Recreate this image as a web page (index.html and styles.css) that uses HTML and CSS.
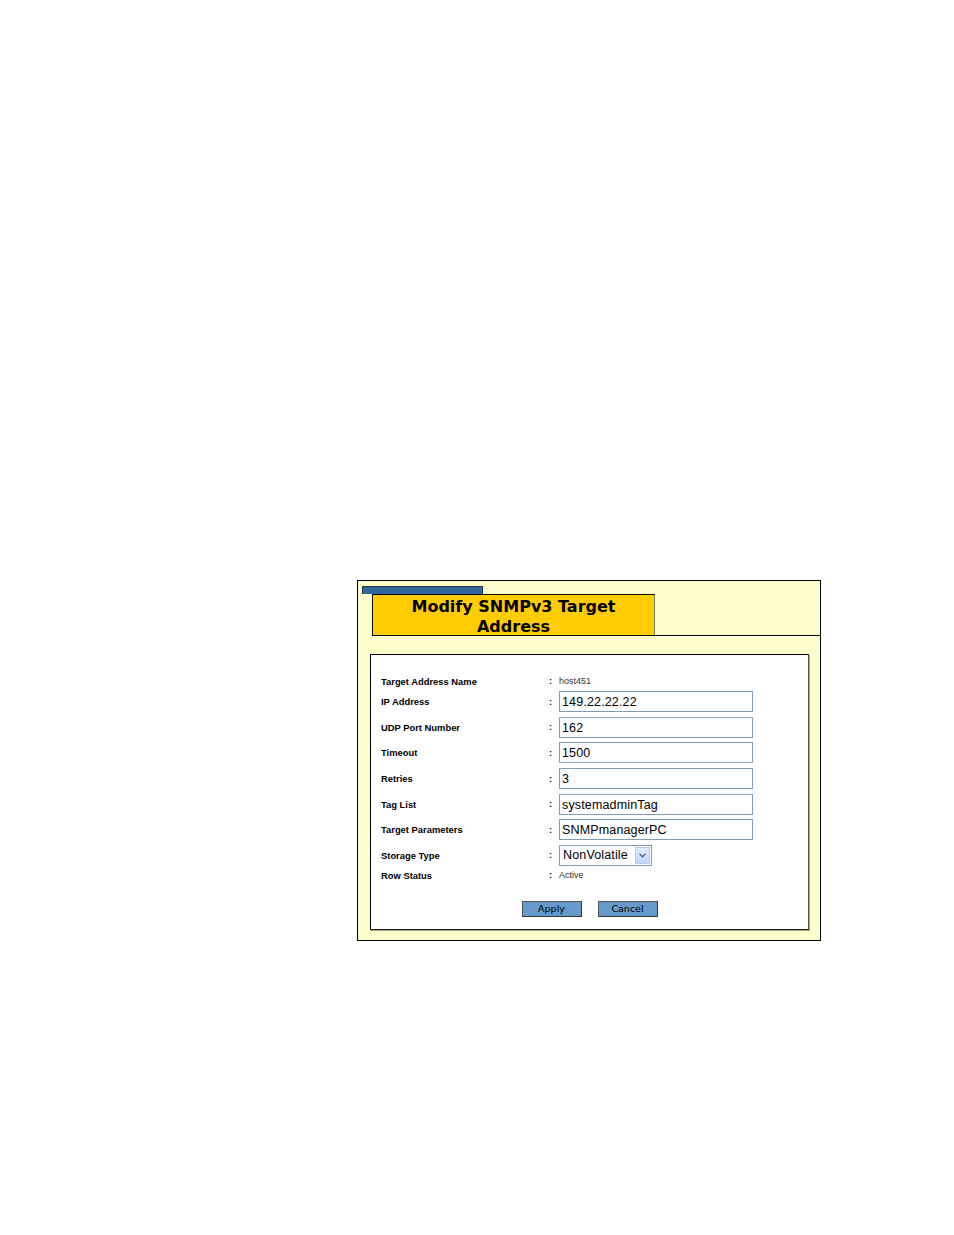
FILE: index.html
```html
<!DOCTYPE html>
<html>
<head>
<meta charset="utf-8">
<link rel="stylesheet" href="styles.css">
</head>
<body>
<div class="page">
  <div class="panel">
    <div class="tab-bar"></div>
    <div class="header">
      <div class="title">Modify SNMPv3 Target<br>Address</div>
    </div>
    <div class="form-box">
      <div class="grid">
        <div class="row row-text">
          <span class="label">Target Address Name</span><span class="colon">:</span><span class="value">host451</span>
        </div>
        <div class="row row-input">
          <span class="label">IP Address</span><span class="colon">:</span><span class="input">149.22.22.22</span>
        </div>
        <div class="row row-input">
          <span class="label">UDP Port Number</span><span class="colon">:</span><span class="input">162</span>
        </div>
        <div class="row row-input">
          <span class="label">Timeout</span><span class="colon">:</span><span class="input">1500</span>
        </div>
        <div class="row row-input">
          <span class="label">Retries</span><span class="colon">:</span><span class="input">3</span>
        </div>
        <div class="row row-input">
          <span class="label">Tag List</span><span class="colon">:</span><span class="input">systemadminTag</span>
        </div>
        <div class="row row-input">
          <span class="label">Target Parameters</span><span class="colon">:</span><span class="input">SNMPmanagerPC</span>
        </div>
        <div class="row row-input">
          <span class="label">Storage Type</span><span class="colon">:</span>
          <span class="select"><span class="select-text">NonVolatile</span><span class="select-btn"><svg width="7" height="5" viewBox="0 0 7 5"><path d="M0.5 0.8 L3.5 3.8 L6.5 0.8" fill="none" stroke="#4d6185" stroke-width="1.3"/></svg></span></span>
        </div>
        <div class="row row-status">
          <span class="label">Row Status</span><span class="colon">:</span><span class="value">Active</span>
        </div>
      </div>
      <div class="buttons">
        <span class="btn">Apply</span>
        <span class="btn">Cancel</span>
      </div>
    </div>
  </div>
</div>
</body>
</html>
```

FILE: styles.css
```css
html, body {
  margin: 0;
  padding: 0;
  background: #ffffff;
}
.page {
  padding-top: 580px;
  padding-left: 357px;
}
.panel {
  width: 462px;
  height: 354px;
  border: 1px solid #000;
  background: #ffffcc;
  box-sizing: content-box;
  padding-top: 5px;
}
.tab-bar {
  margin-left: 4px;
  width: 119px;
  height: 7px;
  background: #336699;
  border: 1px solid #1f3550;
  border-bottom: none;
}
.header {
  margin-left: 14px;
  border-bottom: 1px solid #000;
  display: flex;
}
.title {
  width: 281px;
  height: 38px;
  padding-top: 2px;
  background: #ffcc00;
  border-top: 1px solid #000;
  border-left: 1px solid #000;
  border-right: 1px solid #7a7a6a;
  text-align: center;
  font-family: "DejaVu Sans", Verdana, sans-serif;
  font-weight: bold;
  font-size: 16px;
  line-height: 20px;
  color: #000;
}
.form-box {
  margin: 18px 11px 0 12px;
  height: 276px;
  background: #fff;
  border: 1px solid #000;
  border-right-color: #555;
  border-bottom-color: #222;
  box-shadow: 1px 1px 0 #a0a090;
  padding: 18px 10px 0 10px;
  box-sizing: border-box;
}
.grid {
  display: flex;
  flex-direction: column;
}
.row {
  display: grid;
  grid-template-columns: 168px 10px 1fr;
  align-items: center;
  font-family: "Liberation Sans", Arial, sans-serif;
  font-size: 9px;
}
.row-text { height: 16px; }
.row-input { height: 25.6px; }
.row-status { height: 14px; }
.label {
  font-weight: bold;
  font-size: 9.4px;
  color: #000;
}
.colon {
  font-weight: bold;
  color: #000;
}
.value {
  color: #333;
}
.input {
  display: block;
  width: 194px;
  height: 21px;
  box-sizing: border-box;
  border: 1px solid #7f9db9;
  background: #fff;
  font-family: "Liberation Sans", Arial, sans-serif;
  font-size: 12.5px;
  line-height: 20px;
  letter-spacing: 0.15px;
  padding-left: 2px;
  color: #000;
}
.select {
  display: flex;
  align-items: center;
  width: 93px;
  height: 21px;
  box-sizing: border-box;
  border: 1px solid #7f9db9;
  background: #fff;
  padding: 1px;
}
.select-text {
  flex: 1;
  font-family: "Liberation Sans", Arial, sans-serif;
  font-size: 12.5px;
  letter-spacing: 0.15px;
  padding-left: 2px;
  color: #000;
}
.select-btn {
  width: 15px;
  height: 17px;
  box-sizing: border-box;
  border: 1px solid #b9c9ef;
  background: linear-gradient(#e3ecfd, #c1d3fb);
  display: flex;
  align-items: center;
  justify-content: center;
}
.buttons {
  display: flex;
  justify-content: center;
  gap: 16px;
  margin-top: 19px;
}
.btn {
  display: block;
  width: 60px;
  height: 16px;
  box-sizing: border-box;
  background: #6699cc;
  border: 1px solid #333;
  border-left-color: #555;
  border-top-color: #555;
  font-family: "DejaVu Sans", Verdana, sans-serif;
  font-size: 9.5px;
  line-height: 14px;
  text-align: center;
  color: #000;
}
```
